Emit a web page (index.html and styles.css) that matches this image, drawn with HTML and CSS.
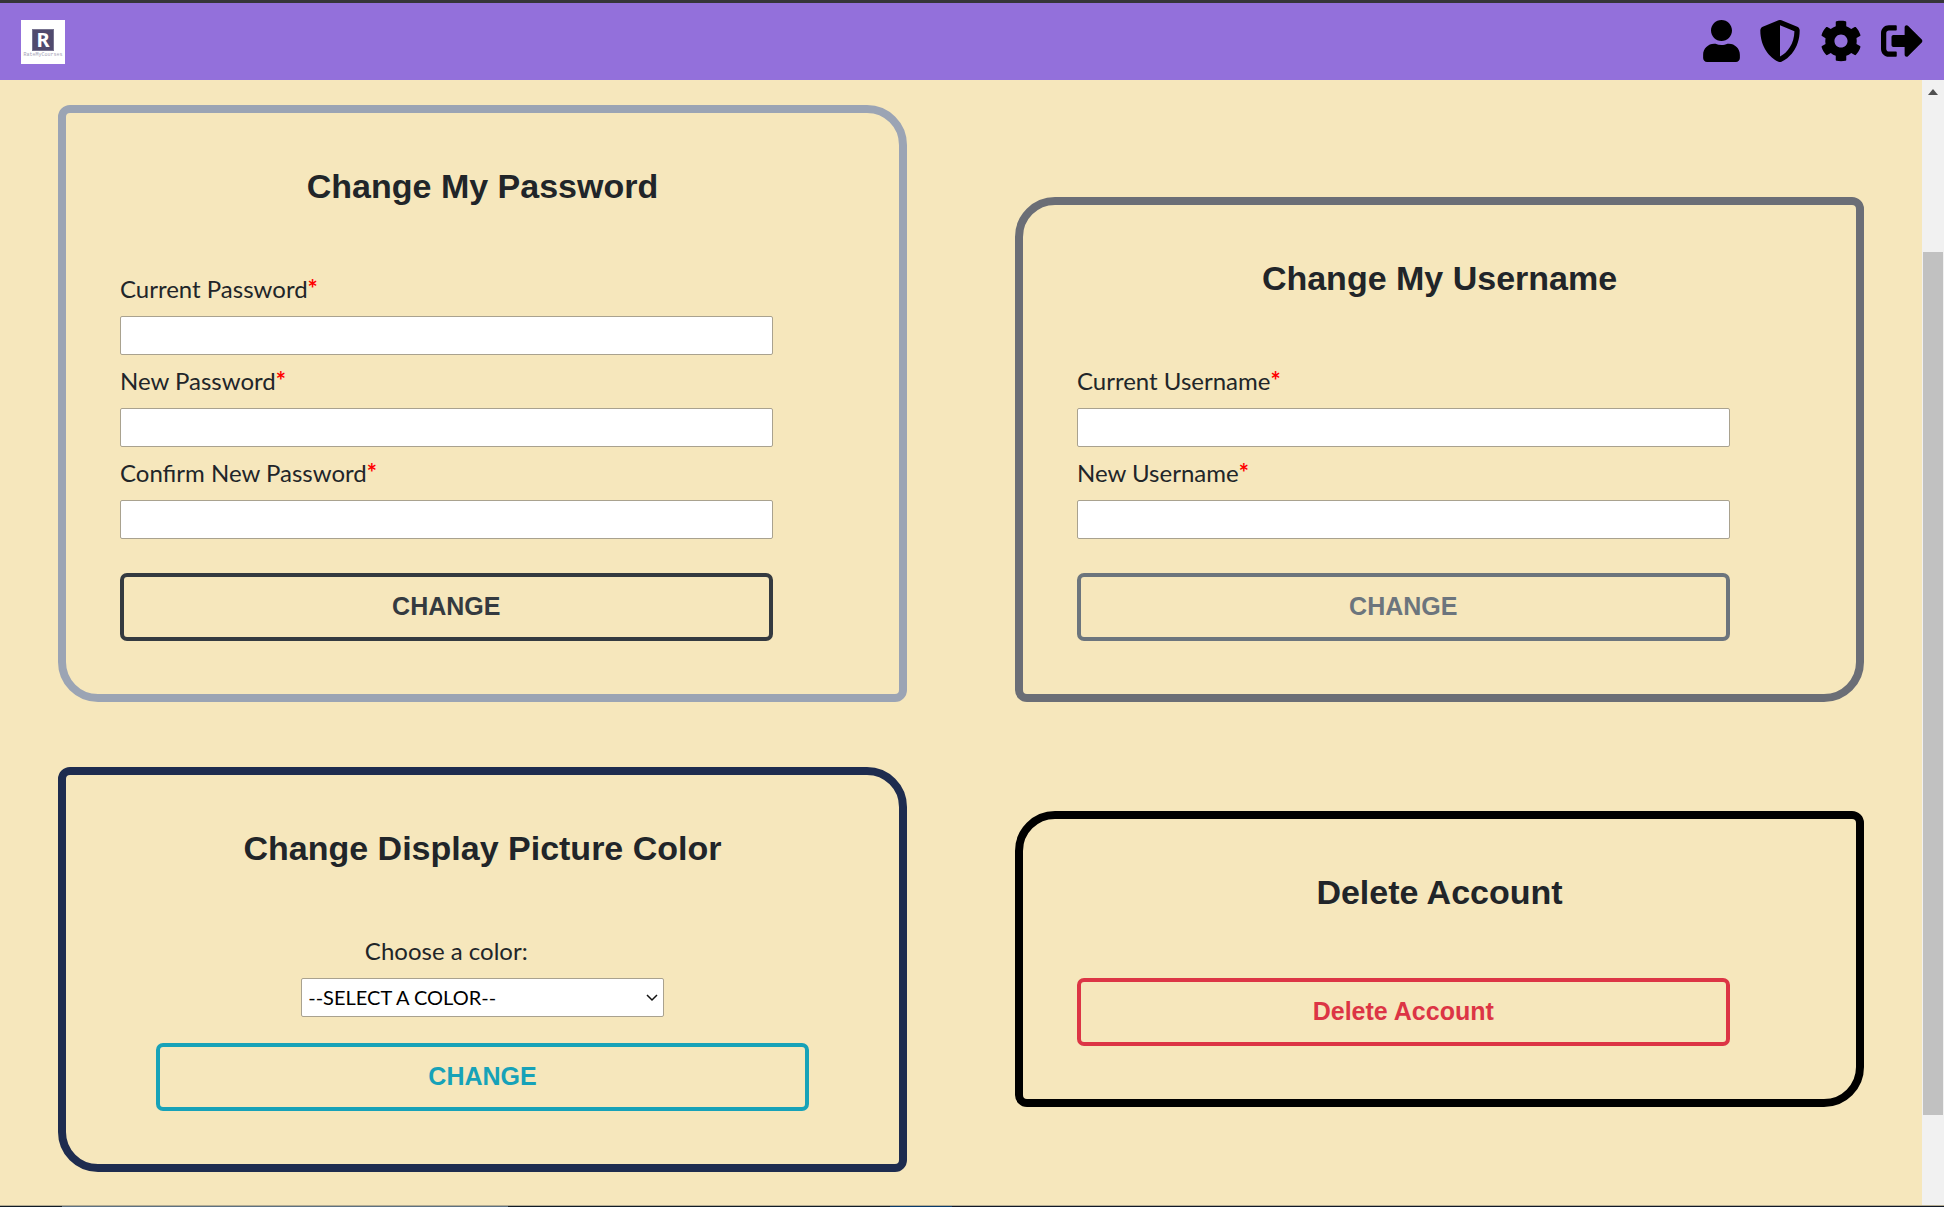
FILE: index.html
```html
<!DOCTYPE html>
<html lang="en">
<head>
<meta charset="utf-8">
<title>RateMyCourses - Settings</title>
<link rel="stylesheet" href="styles.css">
</head>
<body>
<header class="navbar">
  <a class="brand" href="#" aria-label="RateMyCourses home">
    <span class="brand-mark">R</span>
    <span class="brand-name">RateMyCourses</span>
  </a>
  <nav class="nav-links">
    <a href="#" aria-label="Profile"><svg width="37" height="42" viewBox="0 0 448 512"><path d="M224 256c70.700 0 128-57.300 128-128S294.700 0 224 0 96 57.300 96 128s57.300 128 128 128zm89.600 32h-16.700c-22.200 10.200-46.900 16-72.900 16s-50.600-5.800-72.900-16h-16.700C60.200 288 0 348.200 0 422.400V464c0 26.500 21.500 48 48 48h352c26.500 0 48-21.500 48-48v-41.600c0-74.200-60.200-134.400-134.400-134.400z"/></svg></a>
    <a href="#" aria-label="Privacy"><svg width="42" height="42" viewBox="0 0 512 512"><path d="M466.500 83.700l-192-80a48.150 48.150 0 0 0-36.900 0l-192 80C27.700 91.100 16 108.600 16 128c0 198.500 114.500 335.700 221.500 380.300 11.800 4.900 25.100 4.900 36.900 0C360.100 472.600 496 349.300 496 128c0-19.400-11.700-36.900-29.500-44.300zM256.100 446.300l-.1-381 175.900 73.300c-3.300 151.400-82.100 261.100-175.800 307.700z"/></svg></a>
    <a href="#" aria-label="Settings"><svg width="42" height="42" viewBox="0 0 512 512"><path d="M487.400 315.700l-42.600-24.600c4.300-23.200 4.300-47 0-70.200l42.600-24.600c4.900-2.800 7.100-8.600 5.500-14-11.100-35.600-30-67.800-54.700-94.600-3.800-4.100-10-5.100-14.800-2.300L380.800 110c-17.900-15.400-38.500-27.300-60.800-35.100V25.800c0-5.600-3.900-10.500-9.400-11.700-36.700-8.200-74.300-7.800-109.200 0-5.500 1.200-9.400 6.100-9.400 11.700V75c-22.200 7.900-42.800 19.800-60.800 35.100L88.700 85.500c-4.900-2.800-11-1.900-14.800 2.300-24.700 26.700-43.600 58.900-54.700 94.600-1.700 5.400.6 11.200 5.500 14L67.300 221c-4.300 23.200-4.300 47 0 70.200l-42.600 24.600c-4.900 2.800-7.100 8.600-5.500 14 11.100 35.600 30 67.800 54.700 94.600 3.800 4.100 10 5.100 14.800 2.300l42.600-24.600c17.900 15.400 38.500 27.300 60.800 35.100v49.200c0 5.600 3.900 10.500 9.400 11.700 36.700 8.200 74.300 7.800 109.200 0 5.500-1.200 9.400-6.100 9.400-11.700v-49.200c22.200-7.900 42.800-19.800 60.800-35.100l42.600 24.600c4.900 2.800 11 1.900 14.800-2.300 24.700-26.700 43.600-58.900 54.700-94.600 1.500-5.500-.7-11.300-5.600-14.100zM256 336c-44.100 0-80-35.900-80-80s35.900-80 80-80 80 35.900 80 80-35.900 80-80 80z"/></svg></a>
    <a href="#" aria-label="Log out"><svg width="42" height="42" viewBox="0 0 512 512"><path d="M497 273L329 441c-15 15-41 4.500-41-17v-96H152c-13.300 0-24-10.700-24-24v-96c0-13.300 10.700-24 24-24h136V88c0-21.400 25.900-32 41-17l168 168c9.300 9.400 9.300 24.600 0 34zM192 436v-40c0-6.600-5.400-12-12-12H96c-17.700 0-32-14.300-32-32V160c0-17.700 14.300-32 32-32h84c6.600 0 12-5.400 12-12V76c0-6.600-5.400-12-12-12H96c-53 0-96 43-96 96v192c0 53 43 96 96 96h84c6.600 0 12-5.400 12-12z"/></svg></a>
  </nav>
</header>
<div class="viewport">
  <main class="settings">
    <section class="card card-left card-password">
      <h2>Change My Password</h2>
      <form class="fields">
        <div class="field"><label for="cur-pass">Current Password<span class="required">*</span></label><input id="cur-pass" type="password"></div>
        <div class="field"><label for="new-pass">New Password<span class="required">*</span></label><input id="new-pass" type="password"></div>
        <div class="field"><label for="confirm-pass">Confirm New Password<span class="required">*</span></label><input id="confirm-pass" type="password"></div>
        <button class="btn btn-dark" type="button">CHANGE</button>
      </form>
    </section>
    <section class="card card-right card-username">
      <h2>Change My Username</h2>
      <form class="fields">
        <div class="field"><label for="cur-user">Current Username<span class="required">*</span></label><input id="cur-user" type="text"></div>
        <div class="field"><label for="new-user">New Username<span class="required">*</span></label><input id="new-user" type="text"></div>
        <button class="btn btn-secondary" type="button">CHANGE</button>
      </form>
    </section>
    <section class="card card-left card-color">
      <h2>Change Display Picture Color</h2>
      <form class="color-form">
        <label for="color">Choose a color:</label>
        <div class="select-wrap">
          <select id="color"><option>--SELECT A COLOR--</option></select>
          <svg class="chevron" width="12" height="8" viewBox="0 0 12 8"><path d="M1 1l5 5 5-5"/></svg>
        </div>
        <button class="btn btn-info" type="button">CHANGE</button>
      </form>
    </section>
    <section class="card card-right card-delete">
      <h2>Delete Account</h2>
      <button class="btn btn-danger" type="button">Delete Account</button>
    </section>
  </main>
  <div class="scrollbar" aria-hidden="true">
    <svg class="scroll-up" width="10" height="6" viewBox="0 0 10 6"><path d="M0 6l5-6 5 6z"/></svg>
    <div class="scroll-thumb"></div>
  </div>
</div>
<div class="taskbar-edge"></div>
</body>
</html>
```
FILE: styles.css
```css
* { box-sizing: border-box; }

body {
  margin: 0;
  min-height: 100vh;
  display: flex;
  flex-direction: column;
  background: #f6e7bc;
  color: #212529;
  font-family: "Liberation Sans", Arial, sans-serif;
}

.navbar {
  height: 80px;
  padding: 0 21px;
  display: flex;
  align-items: center;
  justify-content: space-between;
  background: #9370db;
  border-top: 3px solid #353539;
}

.brand {
  width: 44px;
  height: 44px;
  padding-top: 4px;
  display: flex;
  flex-direction: column;
  align-items: center;
  justify-content: center;
  gap: 1px;
  background: #fff;
  text-decoration: none;
}
.brand-mark {
  width: 22px;
  height: 22px;
  border: 1px solid #77738f;
  background: #504a6e;
  color: #fff;
  font: bold 20px/20px "Noto Sans", sans-serif;
  text-align: center;
}
.brand-name {
  color: #a5a2b6;
  font: 5px/6px "Liberation Mono", monospace;
}

.nav-links {
  display: flex;
  gap: 19px;
  padding-bottom: 2px;
}
.nav-links a {
  display: flex;
  color: #000;
}
.nav-links svg { fill: currentColor; }

.viewport {
  flex: 1;
  display: flex;
}

.settings {
  flex: 1;
  display: grid;
  grid-template-columns: 1fr 1fr;
  align-content: start;
  align-items: end;
  gap: 65px 108px;
  padding: 25px 58px 32px;
}

.card {
  padding: 53px 54px;
  border: 8px solid;
}
.card-left { border-radius: 12px 40px; }
.card-right { border-radius: 40px 12px; }
.card-password { border-color: #9ba4b4; }
.card-username { border-color: #6b6e76; }
.card-color { border-color: #1e2c4f; }
.card-delete {
  border-color: #000;
  margin-bottom: 65px;
}

h2 {
  margin: 0 0 68px;
  font-size: 34px;
  line-height: 41px;
  text-align: center;
}
.card-delete h2 { margin-bottom: 65px; }

.fields {
  display: flex;
  flex-direction: column;
  gap: 12px;
}
.field {
  width: 90%;
  display: flex;
  flex-direction: column;
  gap: 14px;
}

label {
  font: 24px/27px Lato, sans-serif;
}
.required {
  color: #f00;
  font-weight: bold;
}

input,
select {
  width: 100%;
  height: 39px;
  padding: 0 6px;
  border: 1px solid #a9a28f;
  border-radius: 2px;
  background: #fff;
  color: #000;
  font: 20px Lato, sans-serif;
}
select {
  appearance: none;
  padding: 0 6px 2px;
}

.btn {
  width: 90%;
  height: 68px;
  padding: 0 0 2px;
  display: block;
  border: 4px solid;
  border-radius: 7px;
  background: transparent;
  font: bold 25px "Liberation Sans", Arial, sans-serif;
}
.fields .btn { margin-top: 22px; }
.btn-dark { color: #343a40; }
.btn-secondary { color: #6c757d; }
.btn-info { color: #17a2b8; }
.btn-danger { color: #dc3545; }

.color-form {
  display: flex;
  flex-direction: column;
  align-items: center;
}
.color-form label {
  width: 90%;
  margin-bottom: 14px;
  align-self: flex-start;
  text-align: center;
}
.select-wrap {
  position: relative;
  width: 50%;
  margin-bottom: 26px;
}
.select-wrap select { display: block; }
.chevron {
  position: absolute;
  right: 6px;
  top: 16px;
  fill: none;
  stroke: #111;
  stroke-width: 1.5;
  pointer-events: none;
}

.scrollbar {
  width: 22px;
  padding: 9px 1px 90px;
  display: flex;
  flex-direction: column;
  align-items: center;
  background: #f1f1f1;
}
.scroll-up { fill: #505050; }
.scroll-thumb {
  width: 100%;
  flex: 1;
  margin-top: 157px;
  background: #c1c1c1;
}

.taskbar-edge {
  height: 2px;
  border-top: 1px solid #b5ad93;
  background: linear-gradient(90deg, #101c26 62px, #5d7181 62px 508px, #101c26 508px 890px, #0a3c6b 890px 952px, #101827 952px);
}
```
